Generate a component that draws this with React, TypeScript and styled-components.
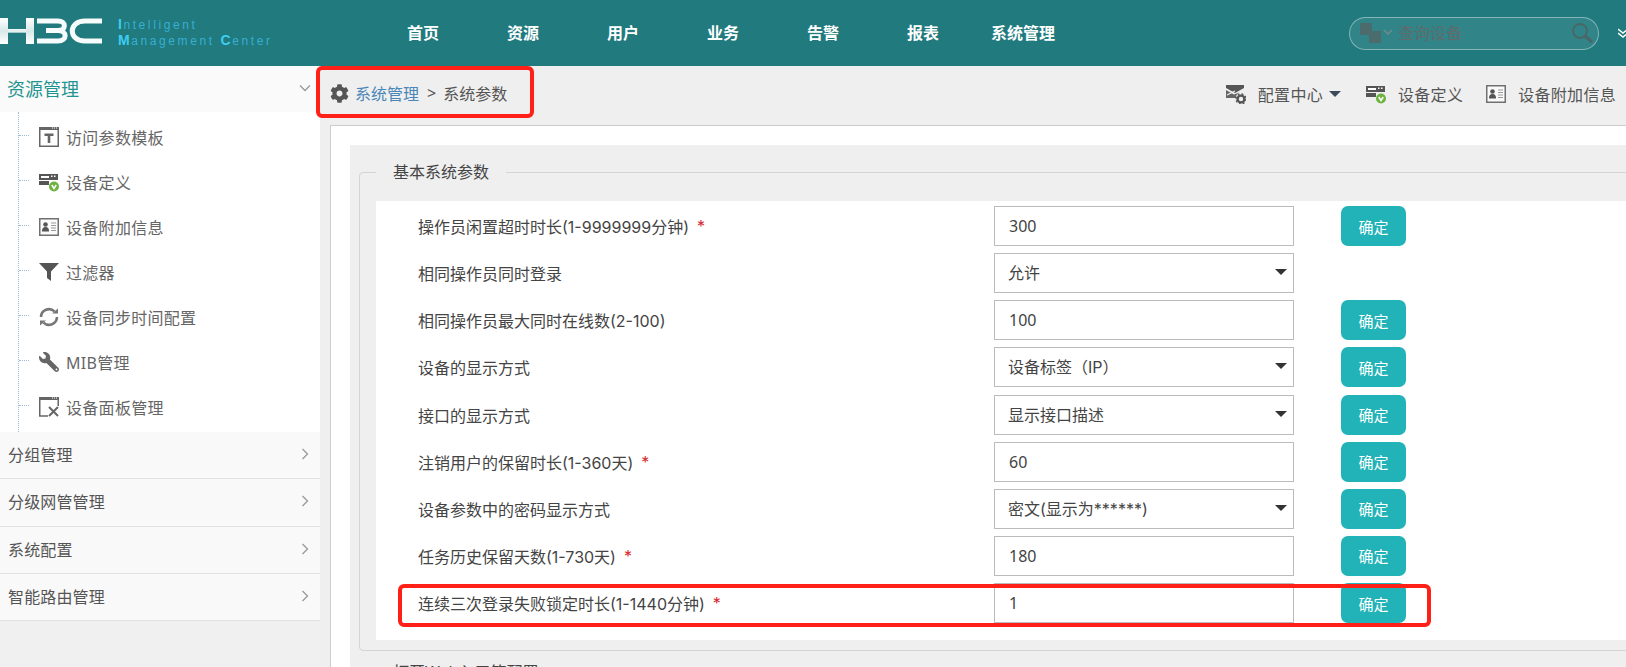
import React from "react";
import styled, { createGlobalStyle } from "styled-components";
import { FaCog, FaWrench } from "react-icons/fa";

const FONT = `"Noto Sans", "Noto Sans CJK SC", sans-serif`;
const WIDE_FONT = `Inter, "Noto Sans CJK SC", sans-serif`;

const Global = createGlobalStyle`
  html, body { margin: 0; padding: 0; height: 100%; overflow: hidden; background: #efefef; }
  * { box-sizing: border-box; }
  body { font-family: ${FONT}; font-size: 16px; color: #444; }
`;

const Page = styled.div`
  width: 1626px;
  height: 667px;
  display: flex;
  flex-direction: column;
  overflow: hidden;
  background: #efefef;
`;

/* header */
const Header = styled.header`
  height: 66px;
  flex: none;
  display: flex;
  align-items: center;
  background: #207a7e;
`;
const LogoBlock = styled.div`
  width: 373px;
  flex: none;
  display: flex;
  align-items: center;
  gap: 14px;
  svg { margin-bottom: 5px; display: block; }
`;
const LogoText = styled.div`
  font-family: "Liberation Sans", sans-serif;
  font-size: 12px;
  line-height: 15px;
  letter-spacing: 2.6px;
  color: #38aed2;
  white-space: nowrap;
  b { color: #3fcdf0; font-size: 14px; letter-spacing: 1.5px; }
`;
const Nav = styled.nav`
  display: flex;
  flex: 1;
`;
const NavItem = styled.a`
  width: 100px;
  text-align: center;
  color: #fff;
  font-weight: 700;
  font-size: 16px;
  line-height: 22px;
`;
const SearchBox = styled.div`
  width: 250px;
  height: 33px;
  margin-right: 19px;
  display: flex;
  align-items: center;
  padding: 0 5px 0 10px;
  border: 1px solid rgba(255, 255, 255, 0.4);
  border-radius: 17px;
  background: rgba(255, 255, 255, 0.08);
`;
const SearchInput = styled.input`
  flex: 1;
  min-width: 0;
  margin-left: 4px;
  border: 0;
  outline: 0;
  padding: 0;
  background: transparent;
  font: 16px ${FONT};
  &::placeholder { color: #5e6c6c; opacity: 1; }
`;
const More = styled.svg`
  flex: none;
  display: block;
`;

/* body */
const Body = styled.div`
  flex: 1;
  min-height: 0;
  display: flex;
`;
const Sidebar = styled.aside`
  width: 320px;
  flex: none;
  background: #f0f0f0;
`;
const ActiveHead = styled.div`
  height: 46px;
  padding: 0 9px 2px 7px;
  display: flex;
  align-items: center;
  justify-content: space-between;
  background: #fafafa;
  color: #1f9490;
  font-size: 18px;
`;
const ItemPanel = styled.div`
  height: 320px;
  padding-left: 18px;
  background: #fff;
`;
const ItemList = styled.ul`
  height: 100%;
  margin: 0;
  padding: 2px 0 0;
  list-style: none;
  border-left: 1px dotted #9dbad6;
`;
const Item = styled.li`
  height: 45px;
  display: flex;
  align-items: center;
  color: #666;
  font-size: 16px;
  letter-spacing: 0.3px;
`;
const Tick = styled.span`
  width: 10px;
  margin-right: 10px;
  border-top: 1px dotted #9dbad6;
  margin-top: -3px;
`;
const ItemIcon = styled.span`
  width: 20px;
  height: 20px;
  margin-right: 7px;
  flex: none;
  display: flex;
  align-items: center;
  justify-content: center;
  color: #666;
  svg { display: block; }
`;
const Group = styled.div`
  height: 47.33px;
  padding: 0 9px 2px 8px;
  display: flex;
  align-items: center;
  justify-content: space-between;
  background: #f9f9f9;
  border-bottom: 1px solid #e2e2e2;
  color: #555;
  font-size: 16px;
  letter-spacing: 0.15px;
`;

/* main */
const Main = styled.main`
  flex: 1;
  min-width: 0;
  margin-left: 10px;
  display: flex;
  flex-direction: column;
`;
const TopBar = styled.div`
  height: 59px;
  flex: none;
  display: flex;
  align-items: center;
  justify-content: space-between;
  padding-right: 10px;
`;
const Crumbs = styled.div`
  position: relative;
  align-self: stretch;
  display: flex;
  align-items: center;
  padding: 0 0 5px 0;
  color: #555;
  font-size: 16px;
  svg { margin-right: 6px; color: #555; }
`;
const CrumbLink = styled.a`
  color: #4b86b8;
`;
const CrumbSep = styled.span`
  margin: 0 7px 0 8px;
`;
const Marker = styled.div<{ $l: number; $t: number; $w: number; $h: number }>`
  position: absolute;
  left: ${(p) => p.$l}px;
  top: ${(p) => p.$t}px;
  width: ${(p) => p.$w}px;
  height: ${(p) => p.$h}px;
  border: 4px solid #ff2018;
  border-radius: 6px;
  pointer-events: none;
`;
const Tools = styled.div`
  display: flex;
  align-items: center;
  margin-bottom: 4px;
  color: #555;
  font-size: 16px;
  letter-spacing: 0.3px;
`;
const Tool = styled.a<{ $gap: number }>`
  display: flex;
  align-items: center;
  margin-left: ${(p) => p.$gap}px;
  svg { margin-right: 12px; display: block; flex: none; }
`;
const Caret = styled.i`
  width: 0;
  height: 0;
  margin-left: 6px;
  border-left: 6px solid transparent;
  border-right: 6px solid transparent;
  border-top: 6px solid #3c4a5a;
`;
const Panel = styled.div`
  flex: 1;
  min-height: 0;
  overflow: hidden;
  padding: 19px 0 0 19px;
  background: #fff;
  border-left: 1px solid #ccc;
  border-top: 1px solid #ccc;
`;
const Sheet = styled.div`
  width: 1400px;
  height: 600px;
  padding: 16px 0 0 9px;
  background: #efefef;
`;
const Fieldset = styled.fieldset`
  margin: 0 0 10px;
  padding: 18px 0 10px 16px;
  border: 1px solid #d4d4d4;
  border-radius: 4px;
  min-width: 0;
`;
const Legend = styled.legend`
  padding: 0 17px;
  font-size: 16px;
  line-height: 22px;
  color: #444;
`;
const Table = styled.div`
  padding: 5px 0 10px 42px;
  background: #fff;
`;
const Row = styled.div`
  position: relative;
  height: 47.125px;
  display: grid;
  grid-template-columns: 576px 300px 65px;
  column-gap: 0;
  align-items: start;
`;
const Label = styled.label`
  height: 40px;
  display: flex;
  align-items: center;
  color: #444;
  font: 16px ${WIDE_FONT};
  white-space: nowrap;
`;
const Star = styled.span`
  margin-left: 8px;
  color: #d8262c;
`;
const TextInput = styled.input`
  width: 300px;
  height: 40px;
  padding: 0 14px;
  border: 1px solid #bbb;
  border-radius: 0;
  outline: 0;
  background: #fff;
  color: #444;
  font: 16px ${FONT};
`;
const SelectWrap = styled.div`
  position: relative;
  width: 300px;
  height: 40px;
  &::after {
    content: "";
    position: absolute;
    right: 7px;
    top: 16px;
    border-left: 6px solid transparent;
    border-right: 6px solid transparent;
    border-top: 6px solid #333;
  }
`;
const Select = styled.select`
  width: 100%;
  height: 100%;
  padding: 0 14px 0 13px;
  appearance: none;
  border: 1px solid #bbb;
  border-radius: 0;
  outline: 0;
  background: #fff;
  color: #444;
  font: 16px ${WIDE_FONT};
`;
const Confirm = styled.button`
  grid-column: 3;
  margin-left: 47px;
  width: 65px;
  height: 40px;
  border: 0;
  border-radius: 7px;
  background: #22b3b8;
  color: #fff;
  font: 15px ${FONT};
  padding: 0;
`;

/* drawings */
const Chevron = ({ down }: { down?: boolean }) => (
  <svg width="12" height="12" viewBox="0 0 12 12" fill="none" stroke="#999" strokeWidth="1.3">
    <path d={down ? "M1 3.5 6 8.5 11 3.5" : "M3.5 1 8.5 6 3.5 11"} />
  </svg>
);

const H3C = () => (
  <svg width="104" height="26" viewBox="0 0 104 26">
    <defs>
      <linearGradient id="lg" x1="0" x2="0" y1="0" y2="1">
        <stop offset="0" stopColor="#fff" />
        <stop offset=".5" stopColor="#d8e8e8" />
        <stop offset="1" stopColor="#fff" />
      </linearGradient>
    </defs>
    <g fill="url(#lg)">
      <rect x="0" y="0" width="8" height="26" />
      <rect x="26" y="0" width="8" height="26" />
      <rect x="8" y="11" width="18" height="3.6" />
    </g>
    <g fill="none" stroke="#f6fbfb">
      <path d="M37 3H58C66.5 3 66.5 12.5 58 12.5H46" strokeWidth="5" />
      <path d="M46 12.5H58C67.5 12.5 67.5 23 58 23H37" strokeWidth="5" />
      <path d="M102 3H85C68 3 68 23 85 23H102" strokeWidth="5" />
    </g>
  </svg>
);

const DeviceIcon = () => (
  <svg width="20" height="20" viewBox="0 0 20 20">
    <rect x="0" y="2" width="19" height="6" fill="#555" />
    <rect x="0" y="9" width="10" height="4" fill="#555" />
    <rect x="2" y="4" width="8" height="2" fill="#fff" />
    <rect x="12" y="3.5" width="1.5" height="1.5" fill="#fff" />
    <rect x="15" y="3.5" width="1.5" height="1.5" fill="#fff" />
    <circle cx="15" cy="14.5" r="5" fill="#6db33f" />
    <path d="M12.8 13 15 16.5 17.2 13" fill="none" stroke="#fff" strokeWidth="1.5" />
  </svg>
);

const CardIcon = () => (
  <svg width="20" height="18" viewBox="0 0 20 18">
    <rect x=".75" y=".75" width="18.5" height="16.5" fill="#fafafa" stroke="#707070" strokeWidth="1.5" />
    <circle cx="6.5" cy="6.5" r="2.3" fill="#555" />
    <path d="M3 13.5c0-3.5 1.5-4.5 3.5-4.5s3.5 1 3.5 4.5z" fill="#555" />
    <path d="M12 5h5M12 7.5h5M12 10h5M12 12.5h5" stroke="#999" strokeWidth="1.2" />
  </svg>
);

const TemplateIcon = () => (
  <svg width="20" height="20" viewBox="0 0 20 20">
    <rect x=".75" y=".75" width="18.5" height="18.5" fill="#fff" stroke="#666" strokeWidth="1.5" />
    <rect x="0" y="0" width="20" height="3" fill="#666" />
    <path d="M13 1h1M15 1h1M17 1h1" stroke="#fff" strokeWidth="1" />
    <path d="M5.5 6.5h9v2.4h-3.2V16H8.7V8.9H5.5z" fill="#666" />
  </svg>
);

const FilterIcon = () => (
  <svg width="20" height="20" viewBox="0 0 20 20">
    <path d="M0 1h20L12 9.5V19l-4-3V9.5z" fill="#555" />
  </svg>
);

const SyncIcon = () => (
  <svg width="20" height="20" viewBox="0 0 20 20" fill="none" stroke="#777" strokeWidth="2.6">
    <path d="M2 10a8 8 0 0 1 13.5-5.6" />
    <path d="M18 10a8 8 0 0 1-13.5 5.6" />
    <path d="M13 6.5h6v-5z" fill="#777" stroke="none" />
    <path d="M7 13.5H1v5z" fill="#777" stroke="none" />
  </svg>
);

const PanelIcon = () => (
  <svg width="20" height="20" viewBox="0 0 20 20">
    <path d="M9 19H.75V.75h18.5V9" fill="none" stroke="#666" strokeWidth="1.5" />
    <rect x="0" y="0" width="20" height="3" fill="#666" />
    <path d="M13 1h1M15 1h1M17 1h1" stroke="#fff" strokeWidth="1" />
    <path d="M10 10l9 9M19 10l-9 9" stroke="#666" strokeWidth="2" />
  </svg>
);

const ConfigIcon = () => (
  <svg width="20" height="20" viewBox="0 0 20 20">
    <path d="M0 1h18v3L9 9 0 4z" fill="#555" />
    <path d="M0 6l8 4.5 5-2V9a5 5 0 0 0-3 5H0z" fill="#666" />
    <path d="M1 11l8-4" stroke="#f0f0f0" strokeWidth="1.2" />
    <circle cx="15" cy="15" r="3.4" fill="none" stroke="#555" strokeWidth="2.4" />
    <circle cx="15" cy="15" r="5" fill="none" stroke="#555" strokeWidth="1.4" strokeDasharray="2 1.9" />
  </svg>
);

const ITEMS: [React.ReactNode, string][] = [
  [<TemplateIcon />, "访问参数模板"],
  [<DeviceIcon />, "设备定义"],
  [<CardIcon />, "设备附加信息"],
  [<FilterIcon />, "过滤器"],
  [<SyncIcon />, "设备同步时间配置"],
  [<FaWrench size={20} style={{ transform: "scaleX(-1)" }} />, "MIB管理"],
  [<PanelIcon />, "设备面板管理"],
];

const GROUPS = ["分组管理", "分级网管管理", "系统配置", "智能路由管理"];
const NAV = ["首页", "资源", "用户", "业务", "告警", "报表", "系统管理"];

type RowDef = {
  label: string;
  star?: boolean;
  value?: string;
  options?: string[];
  noButton?: boolean;
  marked?: boolean;
};

const ROWS: RowDef[] = [
  { label: "操作员闲置超时时长(1-9999999分钟)", star: true, value: "300" },
  { label: "相同操作员同时登录", options: ["允许", "禁止"], noButton: true },
  { label: "相同操作员最大同时在线数(2-100)", value: "100" },
  { label: "设备的显示方式", options: ["设备标签（IP）", "设备标签", "IP"] },
  { label: "接口的显示方式", options: ["显示接口描述", "显示接口名称"] },
  { label: "注销用户的保留时长(1-360天)", star: true, value: "60" },
  { label: "设备参数中的密码显示方式", options: ["密文(显示为******)", "明文"] },
  { label: "任务历史保留天数(1-730天)", star: true, value: "180" },
  { label: "连续三次登录失败锁定时长(1-1440分钟)", star: true, value: "1", marked: true },
];

export default function App() {
  return (
    <Page>
      <Global />
      <Header>
        <LogoBlock>
          <H3C />
          <LogoText>
            <div><b>I</b>ntelligent</div>
            <div><b>M</b>anagement <b>C</b>enter</div>
          </LogoText>
        </LogoBlock>
        <Nav>
          {NAV.map((n) => (
            <NavItem key={n}>{n}</NavItem>
          ))}
        </Nav>
        <SearchBox>
          <svg width="34" height="20" viewBox="0 0 34 20" style={{ flex: "none" }}>
            <rect x="0" y="0" width="12" height="12" fill="#4c6b6c" />
            <rect x="9" y="8" width="12" height="12" fill="#4c6b6c" />
            <path d="M24 7l4 4 4-4" fill="none" stroke="#6d8a8b" strokeWidth="1.6" />
          </svg>
          <SearchInput placeholder="查询设备" readOnly />
          <svg width="22" height="22" viewBox="0 0 22 22" fill="none" stroke="#4c6566" style={{ flex: "none" }}>
            <circle cx="9" cy="9" r="7" strokeWidth="1.8" />
            <path d="M14 14l7 6" strokeWidth="3" />
          </svg>
        </SearchBox>
        <More width="8" height="11" viewBox="0 0 8 11" fill="none" stroke="#fff" strokeWidth="1.5">
          <path d="M0 1l5 4 3-2.5M0 5l5 4 3-2.5" />
        </More>
      </Header>
      <Body>
        <Sidebar>
          <ActiveHead>
            资源管理
            <Chevron down />
          </ActiveHead>
          <ItemPanel>
            <ItemList>
              {ITEMS.map(([icon, text]) => (
                <Item key={text}>
                  <Tick />
                  <ItemIcon>{icon}</ItemIcon>
                  {text}
                </Item>
              ))}
            </ItemList>
          </ItemPanel>
          {GROUPS.map((g) => (
            <Group key={g}>
              {g}
              <Chevron />
            </Group>
          ))}
        </Sidebar>
        <Main>
          <TopBar>
            <Crumbs>
              <FaCog size={19} />
              <CrumbLink>系统管理</CrumbLink>
              <CrumbSep>&gt;</CrumbSep>
              系统参数
              <Marker $l={-14} $t={0} $w={218} $h={52} />
            </Crumbs>
            <Tools>
              <Tool $gap={0}>
                <ConfigIcon />
                配置中心
                <Caret />
              </Tool>
              <Tool $gap={25}>
                <DeviceIcon />
                设备定义
              </Tool>
              <Tool $gap={23}>
                <CardIcon />
                设备附加信息
              </Tool>
            </Tools>
          </TopBar>
          <Panel>
            <Sheet>
              <Fieldset>
                <Legend>基本系统参数</Legend>
                <Table>
                  {ROWS.map((r) => (
                    <Row key={r.label}>
                      <Label>
                        {r.label}
                        {r.star && <Star>*</Star>}
                      </Label>
                      {r.options ? (
                        <SelectWrap>
                          <Select defaultValue={r.options[0]}>
                            {r.options.map((o) => (
                              <option key={o}>{o}</option>
                            ))}
                          </Select>
                        </SelectWrap>
                      ) : (
                        <TextInput defaultValue={r.value} />
                      )}
                      {!r.noButton && <Confirm>确定</Confirm>}
                      {r.marked && <Marker $l={-20} $t={1} $w={1033} $h={43} />}
                    </Row>
                  ))}
                </Table>
              </Fieldset>
              <Fieldset>
                <Legend>打开Web入口等配置</Legend>
              </Fieldset>
            </Sheet>
          </Panel>
        </Main>
      </Body>
    </Page>
  );
}
